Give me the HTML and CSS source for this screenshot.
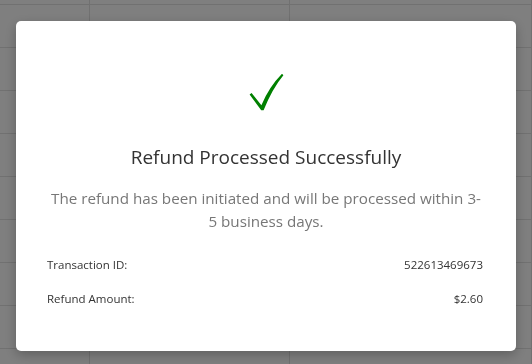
FILE: index.html
```html
<!DOCTYPE html>
<html lang="en">
  <head>
    <meta charset="UTF-8" />
    <meta name="viewport" content="width=device-width, initial-scale=1.0" />
    <title>Refund</title>
    <link rel="stylesheet" href="styles.css">
  </head>

  <body>
    <div class="sheet">
      <div></div><div></div><div></div>
      <div></div><div></div><div></div>
      <div></div><div></div><div></div>
      <div></div><div></div><div></div>
      <div></div><div></div><div></div>
      <div></div><div></div><div></div>
      <div></div><div></div><div></div>
      <div></div><div></div><div></div>
      <div></div><div></div><div></div>
      <div></div><div></div><div></div>
    </div>

    <div class="overlay">
      <div class="modal">
        <div class="check">
          <svg width="36" height="38" viewBox="0 0 36 38">
            <path d="M1.6 21.6 L3.6 20 L13.4 32.2 Q21 14 34 0.8 L35.4 2.2 Q24.4 15.4 15.6 37.2 L13.2 37.2 Z" fill="#008000"/>
          </svg>
        </div>
        <h2 class="title">Refund Processed Successfully</h2>
        <p class="message">The refund has been initiated and will be processed within 3-5 business days.</p>
        <div class="details">
          <div class="row">
            <span>Transaction ID:</span>
            <span>522613469673</span>
          </div>
          <div class="row">
            <span>Refund Amount:</span>
            <span>$2.60</span>
          </div>
        </div>
      </div>
    </div>
  </body>
</html>
```

FILE: styles.css
```css
body {
  margin: 0;
  background: #ffffff;
  font-family: "Open Sans", "Noto Sans", sans-serif;
  overflow: hidden;
}

/* the table behind the dialog */
.sheet {
  display: grid;
  grid-template-columns: 90px 200px 1fr;
  grid-auto-rows: 43px;
  margin-top: -38px;
  height: 402px;
  overflow: hidden;
}

.sheet div {
  border-right: 1px solid #e2e2e2;
  border-bottom: 1px solid #e2e2e2;
}

.overlay {
  position: fixed;
  inset: 0;
  background: rgba(0, 0, 0, 0.5);
  display: flex;
  justify-content: center;
  align-items: flex-start;
  padding-top: 21px;
}

.modal {
  width: 500px;
  height: 330px;
  box-sizing: border-box;
  background: #ffffff;
  border-radius: 5px;
  box-shadow: 0 4px 12px rgba(0, 0, 0, 0.25);
  padding: 52px 30px 30px;
  text-align: center;
}

.check {
  height: 38px;
  display: flex;
  justify-content: center;
}

.title {
  margin: 33px 0 0;
  font-size: 19px;
  font-weight: 400;
  line-height: 26px;
  color: #333333;
}

.message {
  margin: 17px 0 0;
  padding: 0 4px;
  font-size: 15.2px;
  line-height: 23px;
  color: #777777;
}

.details {
  margin: 15px 3px 0 1px;
}

.row {
  display: flex;
  justify-content: space-between;
  font-size: 11.5px;
  line-height: 18px;
  color: #333333;
  padding: 8px 0;
}
```
